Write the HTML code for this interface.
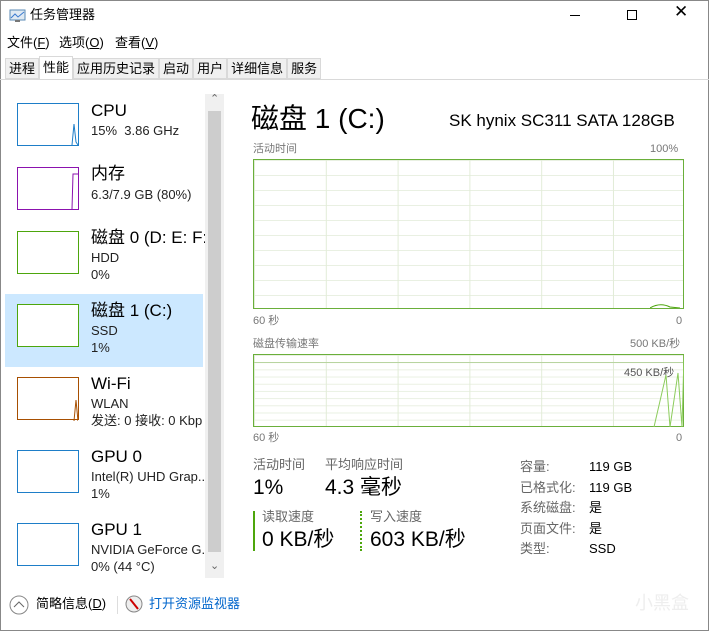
<!DOCTYPE html>
<html><head><meta charset="utf-8"><style>
*{margin:0;padding:0;box-sizing:border-box}
body{width:709px;height:631px;overflow:hidden;background:#fff;font-family:"Liberation Sans","Noto Sans CJK SC",sans-serif;position:relative;color:#000;line-height:1.15}
.a{position:absolute;white-space:nowrap}
.th{position:absolute;left:17px;width:62px;height:43px;border:1px solid #1e7ec8;background:#fff}
.t1{font-size:17px;line-height:20px}
.t2{font-size:13px;color:#222;line-height:16px}
.g{color:#777;font-size:11px;line-height:13px}
.chart{position:absolute;left:253px;width:431px;border:1px solid #6aaf3a;
background-image:linear-gradient(to right,#e2ecd8 1px,transparent 1px),linear-gradient(to bottom,#e9f0e2 1px,transparent 1px);}
.lbl{color:#666;font-size:13px;line-height:16px}
.tabs div{background:#f0f0f0;border:1px solid #d9d9d9;padding:0 3px;height:21px;line-height:19px}
</style></head><body>
<div class="a" style="left:0;top:0;width:709px;height:631px;border:1px solid #888"></div>
<svg class="a" style="left:9px;top:9px" width="18" height="14"><rect x="1" y="1" width="15" height="10" fill="#dfe9f2" stroke="#5a8ab5"/><polyline points="2,9 6,5 9,8 15,3" fill="none" stroke="#3a7ad0"/><rect x="6" y="11" width="5" height="2" fill="#777"/></svg>
<div class="a" style="left:30px;top:8px;font-size:13px">任务管理器</div>
<div class="a" style="left:570px;top:15px;width:10px;height:1px;background:#000"></div>
<div class="a" style="left:627px;top:10px;width:10px;height:10px;border:1px solid #000"></div>
<div class="a" style="left:674px;top:2px;font-size:17px">✕</div>
<div class="a" style="left:7px;top:36px;font-size:13px">文件(<u>F</u>)</div>
<div class="a" style="left:59px;top:36px;font-size:13px">选项(<u>O</u>)</div>
<div class="a" style="left:115px;top:36px;font-size:13px">查看(<u>V</u>)</div>
<div class="a" style="left:0;top:79px;width:709px;height:1px;background:#d9d9d9"></div>
<div class="a tabs" style="left:5px;top:58px;height:21px;display:flex;font-size:13px">
<div>进程</div>
<div style="background:#fff;border-bottom:none;height:23px;margin-top:-2px;line-height:21px">性能</div>
<div>应用历史记录</div>
<div>启动</div>
<div>用户</div>
<div>详细信息</div>
<div>服务</div>
</div>
<div class="a" style="left:5px;top:294px;width:198px;height:73px;background:#cce8ff"></div>
<div class="th" style="top:103px"><svg width="60" height="41"><polyline points="54,41 56,20 58,38 60,41" fill="none" stroke="#1e7ec8"/></svg></div>
<div class="a t1" style="left:91px;top:101px">CPU</div>
<div class="a t2" style="left:91px;top:123px">15%&nbsp; 3.86 GHz</div>
<div class="th" style="top:167px;border-color:#8b12ae"><svg width="60" height="41"><polyline points="54,41 55,6 60,6" fill="none" stroke="#8b12ae"/></svg></div>
<div class="a t1" style="left:91px;top:164px">内存</div>
<div class="a t2" style="left:91px;top:187px">6.3/7.9 GB (80%)</div>
<div class="th" style="top:231px;border-color:#4da60c"></div>
<div class="a t1" style="left:91px;top:228px">磁盘 0 (D: E: F:</div>
<div class="a t2" style="left:91px;top:250px">HDD</div>
<div class="a t2" style="left:91px;top:267px">0%</div>
<div class="th" style="top:304px;border-color:#4da60c"></div>
<div class="a t1" style="left:91px;top:301px">磁盘 1 (C:)</div>
<div class="a t2" style="left:91px;top:323px">SSD</div>
<div class="a t2" style="left:91px;top:340px">1%</div>
<div class="th" style="top:377px;border-color:#a74f01"><svg width="60" height="43"><polyline points="56,43 58,22 60,43" fill="none" stroke="#a74f01"/></svg></div>
<div class="a t1" style="left:91px;top:374px">Wi-Fi</div>
<div class="a t2" style="left:91px;top:396px">WLAN</div>
<div class="a t2" style="left:91px;top:413px">发送: 0 接收: 0 Kbp</div>
<div class="th" style="top:450px"></div>
<div class="a t1" style="left:91px;top:447px">GPU 0</div>
<div class="a t2" style="left:91px;top:469px">Intel(R) UHD Grap...</div>
<div class="a t2" style="left:91px;top:486px">1%</div>
<div class="th" style="top:523px"></div>
<div class="a t1" style="left:91px;top:520px">GPU 1</div>
<div class="a t2" style="left:91px;top:542px">NVIDIA GeForce G...</div>
<div class="a t2" style="left:91px;top:559px">0% (44 °C)</div>
<div class="a" style="left:205px;top:94px;width:19px;height:484px;background:#f0f0f0"></div>
<div class="a" style="left:208px;top:111px;width:13px;height:441px;background:#cdcdcd"></div>
<div class="a" style="left:210px;top:93px;font-size:11px;color:#666">⌃</div>
<div class="a" style="left:210px;top:560px;font-size:11px;color:#666">⌄</div>
<div class="a" style="left:251px;top:102px;font-size:28px;line-height:34px">磁盘 1 (C:)</div>
<div class="a" style="left:449px;top:111px;font-size:17px;line-height:20px">SK hynix SC311 SATA 128GB</div>
<div class="a g" style="left:253px;top:143px">活动时间</div>
<div class="a g" style="left:650px;top:143px">100%</div>
<div class="chart" style="top:159px;height:150px;background-size:71.8px 100%,100% 15px"><svg class="a" style="left:396px;top:140px" width="30" height="8"><path d="M0 8 Q10 2 20 7 L30 8" fill="none" stroke="#4da60c"/></svg></div>
<div class="a g" style="left:253px;top:315px">60 秒</div>
<div class="a g" style="left:676px;top:315px">0</div>
<div class="a g" style="left:253px;top:338px">磁盘传输速率</div>
<div class="a g" style="left:630px;top:338px">500 KB/秒</div>
<div class="chart" style="top:354px;height:73px;background-size:71.8px 100%,100% 7.2px">
<div class="a" style="left:0;top:7px;width:429px;height:1px;background:#b8d4a0"></div>
<div class="a g" style="left:370px;top:12px;color:#555">450 KB/秒</div>
<svg class="a" style="left:390px;top:0" width="40" height="72"><polyline points="10,72 22,20 26,72 34,18 38,72 40,0" fill="none" stroke="#8ccc5c"/></svg></div>
<div class="a g" style="left:253px;top:432px">60 秒</div>
<div class="a g" style="left:676px;top:432px">0</div>
<div class="a lbl" style="left:253px;top:457px">活动时间</div>
<div class="a lbl" style="left:325px;top:457px">平均响应时间</div>
<div class="a" style="left:253px;top:475px;font-size:21px;line-height:26px">1%</div>
<div class="a" style="left:325px;top:475px;font-size:21px;line-height:26px">4.3 毫秒</div>
<div class="a" style="left:253px;top:511px;width:2px;height:40px;background:#4da60c"></div>
<div class="a" style="left:360px;top:511px;width:0;height:40px;border-left:2px dotted #4da60c"></div>
<div class="a lbl" style="left:262px;top:509px">读取速度</div>
<div class="a lbl" style="left:370px;top:509px">写入速度</div>
<div class="a" style="left:262px;top:527px;font-size:21px;line-height:26px">0 KB/秒</div>
<div class="a" style="left:370px;top:527px;font-size:21px;line-height:26px">603 KB/秒</div>
<div class="a lbl" style="left:520px;top:457px;line-height:20.5px">容量:<br>已格式化:<br>系统磁盘:<br>页面文件:<br>类型:</div>
<div class="a" style="left:589px;top:457px;font-size:13px;line-height:20.5px">119 GB<br>119 GB<br>是<br>是<br>SSD</div>
<svg class="a" style="left:9px;top:595px" width="20" height="20"><circle cx="10" cy="10" r="9" fill="none" stroke="#888"/><polyline points="5,12 10,7 15,12" fill="none" stroke="#666"/></svg>
<div class="a" style="left:36px;top:597px;font-size:13px">简略信息(<u>D</u>)</div>
<div class="a" style="left:117px;top:596px;width:1px;height:18px;background:#ddd"></div>
<svg class="a" style="left:125px;top:595px" width="18" height="18"><circle cx="9" cy="9" r="8" fill="#eee" stroke="#888"/><line x1="5" y1="4" x2="13" y2="14" stroke="#c00" stroke-width="2"/></svg>
<div class="a" style="left:149px;top:597px;font-size:13px;color:#0066cc">打开资源监视器</div>
<div class="a" style="left:635px;top:593px;font-size:18px;color:#eee">小黑盒</div>
</body></html>
